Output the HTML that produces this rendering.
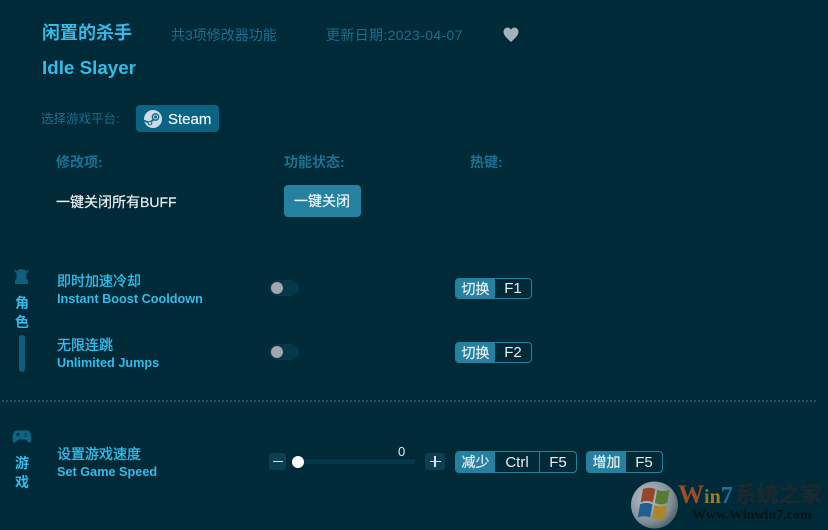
<!DOCTYPE html>
<html lang="zh">
<head>
<meta charset="utf-8">
<style>
html,body{margin:0;padding:0}
body{width:828px;height:530px;overflow:hidden;background:#012a39;position:relative;font-family:"Liberation Sans","Noto Sans CJK SC",sans-serif}
.t{position:absolute;white-space:nowrap;line-height:1}
.b{color:#35bbe8;font-weight:700}
.n{color:#35bbe8;font-weight:400;font-size:14px;-webkit-text-stroke:.35px #35bbe8}
.e{color:#35bbe8;font-weight:700;font-size:12.700px}
.d{color:#186f91}
.h{color:#1c7394;font-size:14px;font-weight:700}
.tg{position:absolute;width:30px;height:16px;border-radius:8px;background:#05384b}
.tg i{position:absolute;left:2px;top:2px;width:12px;height:12px;border-radius:50%;background:#a0a7ad}
.k{position:absolute;height:19px;border:1px solid #26809f;border-radius:4px;display:flex;box-sizing:content-box;color:#e8eef1;font-size:15px;line-height:20px;overflow:hidden}
.k b{font-weight:400;background:#26809f;width:39px;text-align:center;font-size:14px;-webkit-text-stroke:.2px #e8eef1}
.k span{text-align:center;display:block}
.k span+span{border-left:1px solid #26809f}
.sb{position:absolute;width:17px;height:17px;background:#0c3f53;border-radius:3px}
.sb i{position:absolute;background:#dbe4e8}
</style>
</head>
<body>
<div class="t b" style="left:42px;top:24px;font-size:18px">闲置的杀手</div>
<div class="t b" style="left:42px;top:59px;font-size:18.800px">Idle Slayer</div>
<div class="t d" style="left:171px;top:28px;font-size:14px">共3项修改器功能</div>
<div class="t d" style="left:326px;top:28px;font-size:14px;letter-spacing:.35px">更新日期:2023-04-07</div>
<svg style="position:absolute;left:503px;top:27px" width="16" height="15" viewBox="0 0 16 15"><path d="M8 15C3 10.500.5 8 .5 4.800.5 2.300 2.400.5 4.500.5 6 .5 7.300 1.400 8 2.800 8.700 1.400 10 .5 11.500.5c2.100 0 4 1.800 4 4.300C15.500 8 13 10.500 8 15z" fill="#a6b3ba"/></svg>

<div class="t d" style="left:41px;top:113px;font-size:12.500px">选择游戏平台:</div>
<div style="position:absolute;left:136px;top:105px;width:83px;height:27px;background:#0a6383;border-radius:4px"></div>
<svg style="position:absolute;left:144px;top:110px" width="18" height="18" viewBox="0 0 18 18"><circle cx="9" cy="9" r="9" fill="#cfdbe5"/><circle cx="11.500" cy="7" r="3.200" fill="none" stroke="#0a6383" stroke-width="1.300"/><circle cx="11.500" cy="7" r="1.500" fill="#0a6383"/><path d="M0 10.500l5.500 2.500 4-3.500" fill="none" stroke="#0a6383" stroke-width="1.600"/><circle cx="6" cy="13" r="1.800" fill="#cfdbe5" stroke="#0a6383"/></svg>
<div class="t" style="left:168px;top:112px;font-size:15px;color:#eef5f8;-webkit-text-stroke:.2px #eef5f8">Steam</div>

<div class="t h" style="left:56px;top:155px">修改项:</div>
<div class="t h" style="left:284px;top:155px">功能状态:</div>
<div class="t h" style="left:470px;top:155px">热键:</div>

<div class="t" style="left:56px;top:195px;font-size:14px;color:#eaf2f5;-webkit-text-stroke:.2px #eaf2f5">一键关闭所有BUFF</div>
<div style="position:absolute;left:284px;top:185px;width:77px;height:32px;background:#26809f;border-radius:4px"></div>
<div class="t" style="left:294px;top:194px;font-size:14px;color:#f0f6f8;-webkit-text-stroke:.2px #f0f6f8">一键关闭</div>

<svg style="position:absolute;left:13px;top:268px" width="18" height="18" viewBox="0 0 18 18"><path d="M1 1c0 2 1 3.500 3 4l1-2C3 3.200 2 2.500 1 1zM16 1c0 2-1 3.500-3 4l-1-2c2 .2 3-.5 4-2z" fill="#0f5f7c"/><path d="M3.500 5c0-2.500 2-4 5-4s5 1.500 5 4v6l1.500 1v4H2v-4l1.500-1z" fill="#0f5f7c"/></svg>
<div class="t b" style="left:15px;top:296px;font-size:14px">角</div>
<div class="t b" style="left:15px;top:315px;font-size:14px">色</div>
<div style="position:absolute;left:19px;top:335px;width:6px;height:37px;border-radius:3px;background:#0d5f7d"></div>

<div class="t n" style="left:57px;top:274px">即时加速冷却</div>
<div class="t e" style="left:57px;top:293px">Instant Boost Cooldown</div>
<div class="tg" style="left:269px;top:280px"><i></i></div>
<div class="k" style="left:455px;top:278px;width:75px"><b>切换</b><span style="flex:1">F1</span></div>

<div class="t n" style="left:57px;top:338px">无限连跳</div>
<div class="t e" style="left:57px;top:357px">Unlimited Jumps</div>
<div class="tg" style="left:269px;top:344px"><i></i></div>
<div class="k" style="left:455px;top:342px;width:75px"><b>切换</b><span style="flex:1">F2</span></div>

<div style="position:absolute;left:2px;top:400px;width:816px;height:2px;background:repeating-linear-gradient(90deg,#14566c 0 2px,transparent 2px 4px)"></div>

<svg style="position:absolute;left:12px;top:429px" width="20" height="15" viewBox="0 0 20 15"><path d="M5 1.500h10c2.500 0 3.500 2 4 5 .5 3.500.8 7-1.200 7.300-1.800.2-2.800-3.300-4.800-3.300H7C5 10.500 4 14 2.200 13.800.2 13.500.5 10 1 6.500c.5-3 1.500-5 4-5z" fill="#0f6484"/><circle cx="6" cy="5.500" r="1.500" fill="#012a39"/><circle cx="13.500" cy="4.500" r=".8" fill="#012a39"/><circle cx="13.500" cy="7" r=".8" fill="#012a39"/></svg>
<div class="t b" style="left:15px;top:456px;font-size:14px">游</div>
<div class="t b" style="left:15px;top:475px;font-size:14px">戏</div>

<div class="t n" style="left:57px;top:447px">设置游戏速度</div>
<div class="t e" style="left:57px;top:466px">Set Game Speed</div>

<div class="sb" style="left:269px;top:453px"><i style="left:3.500px;top:8px;width:10px;height:1.200px"></i></div>
<div style="position:absolute;left:298px;top:459px;width:117px;height:5px;border-radius:3px;background:#05384b"></div>
<div style="position:absolute;left:292px;top:456px;width:12px;height:12px;border-radius:50%;background:#fff"></div>
<div class="t" style="left:398px;top:445px;font-size:13px;color:#dfe8ec">0</div>
<div class="sb" style="left:425px;top:453px;width:20px"><i style="left:4.500px;top:7.700px;width:11px;height:1.500px"></i><i style="left:9.300px;top:3px;width:1.500px;height:11px"></i></div>

<div class="k" style="left:455px;top:451px;width:120px;height:20px;line-height:21px"><b>减少</b><span style="width:44px">Ctrl</span><span style="flex:1">F5</span></div>
<div class="k" style="left:586px;top:451px;width:75px;height:20px;line-height:21px"><b>增加</b><span style="flex:1">F5</span></div>

<svg style="position:absolute;left:630px;top:481px" width="49" height="48" viewBox="0 0 49 48"><defs><radialGradient id="g" cx=".35" cy=".35" r=".75"><stop offset="0" stop-color="#b8c2c6"/><stop offset=".7" stop-color="#7f8d94"/><stop offset="1" stop-color="#47585f"/></radialGradient></defs><circle cx="24.500" cy="24" r="23.500" fill="url(#g)"/><g transform="translate(2.500 1.500) scale(.95)"><path d="M11 7c4-2 9-2 13 0l-2.500 14c-4-2-9-2-13 0z" fill="#96452a"/><path d="M26 7.500c4 2 9 2 13 0l-2.500 14c-4 2-9 2-13 0z" fill="#557c30"/><path d="M8 23c4-2 9-2 13 0l-2.500 14c-4-2-9-2-13 0z" fill="#215f90"/><path d="M23 23.500c4 2 9 2 13 0L33.500 37.500c-4 2-9 2-13 0z" fill="#ae8428"/></g></svg>
<div class="t" style="left:678px;top:482px;font:700 26px/1 'Liberation Serif',serif;color:#9a4f28">W<span style="color:#6f8330;font-size:20px">i</span><span style="color:#a07d20;font-size:20px">n</span><span style="color:#1b72a4;font-size:24px">7</span></div>
<div class="t" style="left:735px;top:484px;font-size:21.700px;font-weight:700;color:#1f282d">系统之家</div>
<div class="t" style="left:692px;top:509px;font:700 14px/1 'Liberation Serif',serif;color:#071318">Www.Winwin7.com</div>
</body>
</html>
